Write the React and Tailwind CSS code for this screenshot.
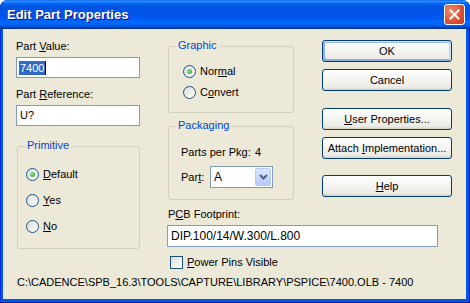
import React from 'react';

function Radio({ checked, children }) {
  return (
    <div className="flex items-center h-[13px]">
      <span className="w-[13px] h-[13px] rounded-full border border-[#1C5180] bg-[linear-gradient(135deg,#dcdcd7,#ffffff)] flex items-center justify-center shrink-0">
        {checked && <span className="w-[5px] h-[5px] rounded-full bg-[radial-gradient(circle_at_35%_35%,#8fe68f,#21a121)]" />}
      </span>
      <span className="ml-[4px] leading-[13px]">{children}</span>
    </div>
  );
}

function Group({ title, className, children }) {
  return (
    <div className={"relative border border-[#D0D0BF] rounded-[3px] flex flex-col " + className}>
      <span className="absolute -top-[8px] left-[7px] px-[2px] bg-[#ECE9D8] text-[#0046D5] leading-[13px]">{title}</span>
      {children}
    </div>
  );
}

function Button({ primary, className, children }) {
  return (
    <div
      className={
        "w-[130px] h-[22px] border border-[#003C74] rounded-[3px] bg-[linear-gradient(180deg,#ffffff,#ecebe5_86%,#d8d0c4)] flex items-center justify-center leading-[13px] " +
        (primary ? "shadow-[inset_-1px_1px_#cee7ff,inset_1px_2px_#98b8ea,inset_-2px_2px_#bcd4f6,inset_1px_-1px_#89ade4,inset_2px_-2px_#89ade4] " : "") +
        className
      }
    >
      {children}
    </div>
  );
}

export default function App() {
  return (
    <div className="w-[470px] h-[303px] flex flex-col rounded-t-[8px] overflow-hidden bg-[#0055EA] shadow-[inset_-1px_-1px_#001E8C,inset_1px_0_#0831D9] font-['Liberation_Sans',Arial,sans-serif] text-[11px] text-black">
      {/* title bar */}
      <div className="h-[29px] shrink-0 flex items-center justify-between pl-[7px] pr-[5px] bg-[linear-gradient(180deg,#0058EE_0%,#3A93FF_4%,#288EFF_6%,#127DFF_8%,#036FFC_10%,#0262EE_14%,#0057E5_20%,#0054E3_24%,#0055EB_56%,#005BF5_66%,#026AFE_76%,#0062EF_86%,#0052D6_92%,#0040AB_94%,#003092_100%)]">
        <span className="text-white font-bold text-[13px] leading-[16px] pt-[1px] [text-shadow:1px_1px_#0F1089]">Edit Part Properties</span>
        <div className="w-[21px] h-[21px] rounded-[3px] border border-white bg-[radial-gradient(circle_at_30%_30%,#EE8A70,#DC4F31_60%,#C7391E)] flex items-center justify-center">
          <svg width="11" height="11" viewBox="0 0 11 11">
            <path d="M1.5 1.5 L9.5 9.5 M9.5 1.5 L1.5 9.5" stroke="white" strokeWidth="2" strokeLinecap="square" />
          </svg>
        </div>
      </div>

      {/* body */}
      <div className="flex-1 pl-[3px] pr-[4px] pb-[4px] flex">
        <div className="flex-1 bg-[#ECE9D8] flex flex-col">
          <div className="flex pl-[13px]">
            {/* left column */}
            <div className="w-[124px] pt-[11px] flex flex-col">
              <div className="leading-[13px]">Part <u>V</u>alue:</div>
              <div className="mt-[4px] h-[21px] border border-[#7F9DB9] bg-white flex items-center pl-[2px]">
                <span className="bg-[#316AC5] text-white leading-[14px] px-px">7400</span>
                <span className="w-px h-[14px] bg-black" />
              </div>
              <div className="mt-[10px] leading-[13px]">Part <u>R</u>eference:</div>
              <div className="mt-[4px] h-[21px] border border-[#7F9DB9] bg-white flex items-center pl-[3px]">U?</div>
              <Group title="Primitive" className="mt-[20px] ml-px w-[123px] h-[103px] pt-[21px] pl-[8px] gap-[13px]">
                <Radio checked><u>D</u>efault</Radio>
                <Radio><u>Y</u>es</Radio>
                <Radio><u>N</u>o</Radio>
              </Group>
            </div>

            {/* middle + right */}
            <div className="ml-[28px] flex flex-col">
              <div className="flex items-start">
                <div className="w-[126px] pt-[17px] flex flex-col">
                  <Group title="Graphic" className="h-[67px] pt-[18px] pl-[14px] gap-[8px]">
                    <Radio checked>Nor<u>m</u>al</Radio>
                    <Radio>C<u>o</u>nvert</Radio>
                  </Group>
                  <Group title="Packaging" className="mt-[13px] h-[74px] pt-[19px] pl-[12px]">
                    <div className="flex leading-[13px]">
                      <span className="w-[74px]">Parts per Pkg:</span>
                      <span>4</span>
                    </div>
                    <div className="mt-[7px] flex items-center">
                      <span className="w-[29px] leading-[13px]">Par<u>t</u>:</span>
                      <div className="w-[63px] h-[22px] border border-[#7F9DB9] bg-white flex items-center justify-between pl-[3px] pr-px">
                        <span className="leading-[13px] text-[12px]">A</span>
                        <div className="w-[16px] h-[18px] rounded-[2px] border border-[#B9CBF3] bg-[linear-gradient(180deg,#DCE6FD,#B6CAF7)] flex items-center justify-center">
                          <svg width="9" height="6" viewBox="0 0 9 6">
                            <path d="M1 1 L4.5 4.5 L8 1" stroke="#4D6185" strokeWidth="2" fill="none" />
                          </svg>
                        </div>
                      </div>
                    </div>
                  </Group>
                </div>
                <div className="ml-[28px] pt-[11px] flex flex-col">
                  <Button primary>OK</Button>
                  <Button className="mt-[7px]">Cancel</Button>
                  <Button className="mt-[17px]"><span><u>U</u>ser Properties...</span></Button>
                  <Button className="mt-[7px]"><span>Attach <u>I</u>mplementation...</span></Button>
                  <Button className="mt-[16px]"><span><u>H</u>elp</span></Button>
                </div>
              </div>
              <div className="mt-[8px] leading-[13px]">P<u>C</u>B Footprint:</div>
              <div className="mt-[4px] -ml-px w-[271px] h-[22px] border border-[#7F9DB9] bg-white flex items-center pl-[3px] text-[12px] leading-[14px]">
                DIP.100/14/W.300/L.800
              </div>
              <div className="mt-[9px] ml-[2px] flex items-center">
                <span className="w-[13px] h-[13px] border border-[#1C5180] bg-[linear-gradient(135deg,#dcdcd7,#ffffff)]" />
                <span className="ml-[4px] leading-[13px]"><u>P</u>ower Pins Visible</span>
              </div>
            </div>
          </div>
          <div className="mt-[7px] pl-[14px] leading-[13px]">C:\CADENCE\SPB_16.3\TOOLS\CAPTURE\LIBRARY\PSPICE\7400.OLB - 7400</div>
        </div>
      </div>
    </div>
  );
}
